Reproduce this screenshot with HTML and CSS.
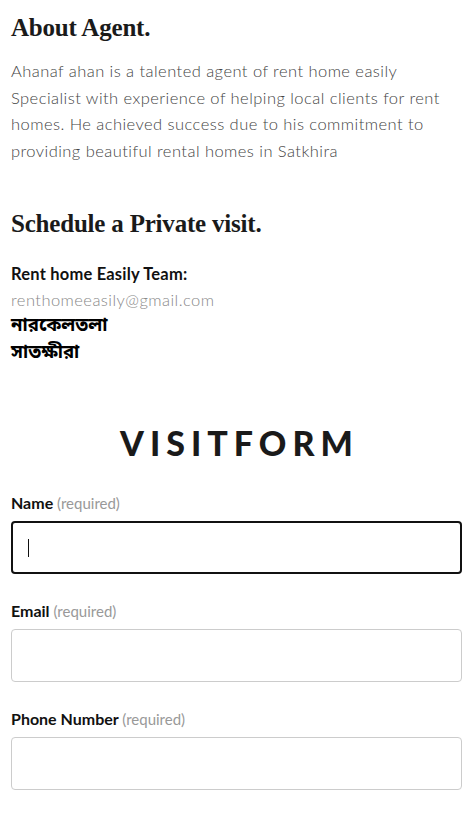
FILE: index.html
```html
<!DOCTYPE html>
<html lang="en">
<head>
    <meta charset="UTF-8">
    <title>Agent - Rent home Easily</title>
    <link rel="stylesheet" href="styles.css">
</head>
<body>
    <section class="about">
        <h2 class="section-title">About Agent.</h2>
        <p class="about-text">Ahanaf ahan is a talented agent of rent home easily Specialist with experience of helping local clients for rent homes. He achieved success due to his commitment to providing beautiful rental homes in Satkhira</p>
    </section>

    <section class="schedule">
        <h2 class="section-title">Schedule a Private visit.</h2>
        <p class="team-name">Rent home Easily Team:</p>
        <p class="team-mail">renthomeeasily@gmail.com</p>
        <p class="team-address">নারকেলতলা</p>
        <p class="team-address">সাতক্ষীরা</p>
    </section>

    <form class="visit-form">
        <h1 class="form-title">VISITFORM</h1>

        <div class="field">
            <label for="name">Name <span class="req">(required)</span></label>
            <div class="input-wrap">
                <input type="text" id="name" class="input input-active">
                <span class="caret"></span>
            </div>
        </div>

        <div class="field">
            <label for="email">Email <span class="req">(required)</span></label>
            <input type="email" id="email" class="input">
        </div>

        <div class="field">
            <label for="phone">Phone Number <span class="req">(required)</span></label>
            <input type="tel" id="phone" class="input">
        </div>
    </form>
</body>
</html>
```

FILE: styles.css
```css
body {
    margin: 0;
    padding: 0 11px 0 11px;
    background-color: #fff;
    color: #111;
    font-family: 'Lato', 'Open Sans', sans-serif;
}

p {
    margin: 0;
}

.section-title {
    font-family: 'Liberation Serif', 'DejaVu Serif', serif;
    font-size: 25px;
    font-weight: bold;
    color: #1a1a1a;
    margin: 0;
    letter-spacing: -0.2px;
}

.about {
    padding-top: 14px;
}

.about .section-title {
    margin-bottom: 16px;
}

.about-text {
    font-size: 16.5px;
    font-weight: 300;
    letter-spacing: 0.45px;
    line-height: 26.7px;
    color: #444;
}

.schedule {
    margin-top: 45px;
}

.schedule .section-title {
    margin-bottom: 23px;
}

.team-name {
    font-size: 16.5px;
    font-weight: bold;
    letter-spacing: 0.2px;
    line-height: 26px;
}

.team-mail {
    font-size: 16.5px;
    font-weight: 300;
    letter-spacing: 0.45px;
    line-height: 26px;
    color: #888;
}

.team-address {
    font-family: 'Noto Sans Bengali', 'Lato', sans-serif;
    font-size: 18.5px;
    font-weight: bold;
    line-height: 27px;
    color: #000;
}

.visit-form {
    margin-top: 55px;
}

.form-title {
    font-family: 'Lato', 'Open Sans', sans-serif;
    font-size: 34px;
    font-weight: 900;
    letter-spacing: 6px;
    padding-left: 6px;
    text-align: center;
    margin: 0 0 30px 0;
    color: #1a1a1a;
}

.field {
    margin-bottom: 27px;
}

.field label {
    display: block;
    font-size: 16px;
    font-weight: bold;
    margin-bottom: 9px;
}

.req {
    font-weight: normal;
    font-size: 15px;
    color: #999;
}

.input-wrap {
    position: relative;
}

.input {
    display: block;
    box-sizing: border-box;
    width: 100%;
    height: 53px;
    border: 1px solid #ccc;
    border-radius: 4px;
    padding: 0 16px;
    font-size: 16px;
    outline: none;
}

.input-active {
    border: 2px solid #111;
}

.caret {
    position: absolute;
    left: 17px;
    top: 18px;
    width: 1px;
    height: 18px;
    background-color: #111;
}
```
